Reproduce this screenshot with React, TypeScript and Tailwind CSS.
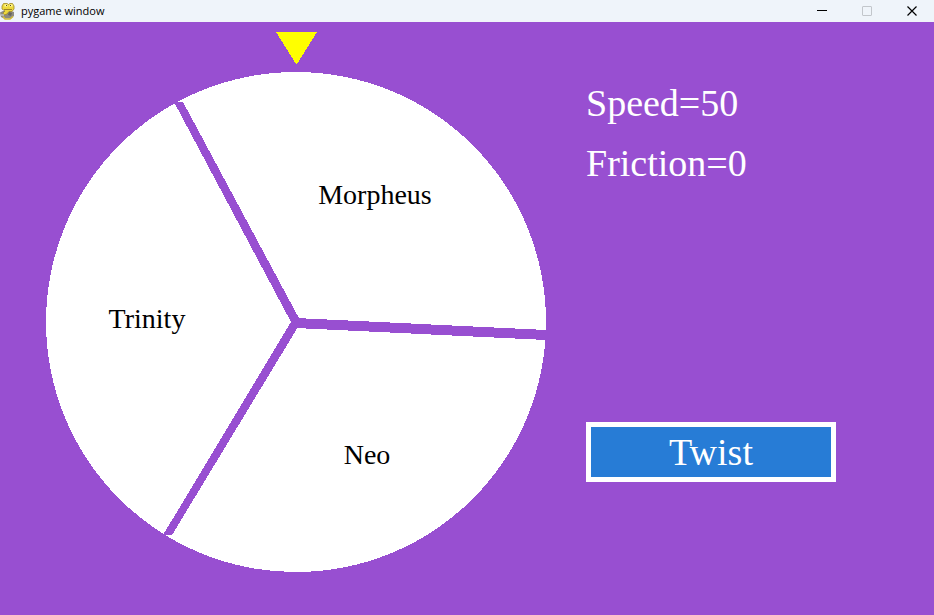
import React from "react";

const segments = [
  { name: "Morpheus", x: 329, y: 172 },
  { name: "Trinity", x: 101, y: 296 },
  { name: "Neo", x: 321, y: 432 },
];

function SnakeIcon() {
  return (
    <svg width="16" height="18" viewBox="0 0 16 18" aria-hidden="true">
      <path d="M0 10.500 3 9h8l3 1v4l-3 2.500H4L1 15Z" fill="#8c8a80" />
      <path d="M2 4 3.500 1.500H7l1.500 1 1.500-1h2.500L14 4v3l-2 2.500H9L7 12l-3 1-1-2 2-2-3-2Z" fill="#ecd83c" stroke="#a08a2a" strokeWidth=".8" />
      <path d="M3 14.500 5 17h5l3-2.500" fill="none" stroke="#d3bc35" strokeWidth="1.500" />
      <path d="M4 7.500h8" stroke="#9c8428" />
      <path d="M4.500 2.500h3v2h-3ZM9.500 2.500h3v2h-3Z" fill="#fff9a8" />
      <path d="M6 3h1v1H6ZM10 3h1v1h-1Z" fill="#554c24" />
      <path d="m9 10 3 1-1 3-3-1Z" fill="#66655f" />
      <path d="M1 12h3v2H1Z" fill="#b5b4af" />
    </svg>
  );
}

function TitleBar() {
  const control = "flex h-[22px] w-[45px] items-center justify-center";
  return (
    <header className="flex h-[22px] items-center bg-[#eff4fa]">
      <SnakeIcon />
      <h1 className="ml-[5px] flex-1 font-['Open_Sans',sans-serif] text-[11px] leading-5 text-black">pygame window</h1>
      <div className="flex">
        <button className={control} aria-label="Minimize">
          <svg width="10" height="10" aria-hidden="true"><path d="M0 4.500h10" stroke="#000" /></svg>
        </button>
        <button className={control} aria-label="Maximize" disabled>
          <svg width="10" height="10" aria-hidden="true"><rect x=".5" y=".5" width="9" height="9" rx=".5" fill="none" stroke="#c2c6cb" /></svg>
        </button>
        <button className={control} aria-label="Close">
          <svg width="10" height="10" aria-hidden="true"><path d="m.5.5 9 9m0-9-9 9" stroke="#000" strokeWidth="1.200" /></svg>
        </button>
      </div>
    </header>
  );
}

function Wheel() {
  return (
    <svg width="500" height="541" viewBox="0 0 500 541" role="img" aria-label="Wheel" className="shrink-0">
      <g shapeRendering="crispEdges">
        <path d="M230 0h41l-20 32h-1Z" fill="#ff0" />
        <circle cx="250" cy="290" r="250" fill="#fff" />
        <g fill="#984fd1">
          <path d="M250 286 500 298v10L250 296Z" />
          <path d="M245 290h10L137 70h-9Z" />
          <path d="M245 290h10L126 503h-9Z" />
        </g>
      </g>
      <g className="font-['Liberation_Serif',serif] text-[28px]" textAnchor="middle" fill="#000">
        {segments.map((s) => (
          <text key={s.name} x={s.x} y={s.y}>{s.name}</text>
        ))}
      </g>
    </svg>
  );
}

export default function App() {
  return (
    <div className="flex min-h-screen flex-col bg-[#984fd1]">
      <TitleBar />
      <main className="flex flex-1 items-start gap-10 pt-[10px] pl-[46px] font-['Liberation_Serif',serif] text-[38px] text-white">
        <Wheel />
        <section className="flex w-[250px] flex-col pt-[41px]">
          <p className="leading-[60px]">Speed=50</p>
          <p className="leading-[60px]">Friction=0</p>
          <button className="mt-[229px] h-[60px] border-[5px] border-white bg-[#277cd6] leading-[50px]">Twist</button>
        </section>
      </main>
    </div>
  );
}
